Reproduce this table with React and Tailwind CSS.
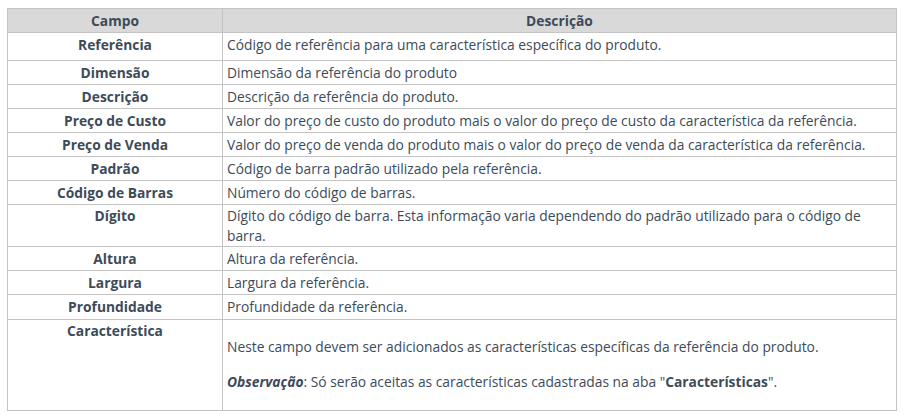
const ROWS = [
  { campo: "Referência", desc: "Código de referência para uma característica específica do produto.", h: "h-[28px]", pad: "align-top pt-[2px]" },
  { campo: "Dimensão", desc: "Dimensão da referência do produto", h: "h-[24px]" },
  { campo: "Descrição", desc: "Descrição da referência do produto.", h: "h-[24px]" },
  { campo: "Preço de Custo", desc: "Valor do preço de custo do produto mais o valor do preço de custo da característica da referência.", h: "h-[24px]" },
  { campo: "Preço de Venda", desc: "Valor do preço de venda do produto mais o valor do preço de venda da característica da referência.", h: "h-[24px]" },
  { campo: "Padrão", desc: "Código de barra padrão utilizado pela referência.", h: "h-[24px]" },
  { campo: "Código de Barras", desc: "Número do código de barras.", h: "h-[24px]" },
  { campo: "Dígito", desc: "Dígito do código de barra. Esta informação varia dependendo do padrão utilizado para o código de barra.", h: "h-[40px]", pad: "align-top pt-[1px]" },
  { campo: "Altura", desc: "Altura da referência.", h: "h-[24px]" },
  { campo: "Largura", desc: "Largura da referência.", h: "h-[24px]" },
  { campo: "Profundidade", desc: "Profundidade da referência.", h: "h-[25px]" },
];

export default function App() {
  return (
    <div className="bg-white w-[907px] h-[415px] pl-[7px] pt-[8px] font-['Open_Sans',sans-serif] text-[13.8px] leading-[20px] text-[#3d4b59]">
      <table className="w-[890px] border-collapse table-fixed">
        <colgroup>
          <col className="w-[215px]" />
          <col />
        </colgroup>
        <thead>
          <tr className="h-[24px] bg-[#d9d9d9]">
            <th className="border border-[#c4c4c4] font-bold text-center px-1 py-0">Campo</th>
            <th className="border border-[#c4c4c4] font-bold text-center px-1 py-0">Descrição</th>
          </tr>
        </thead>
        <tbody>
          {ROWS.map((row) => (
            <tr key={row.campo} className={row.h}>
              <td className={`border border-[#c4c4c4] font-bold text-center px-1 py-0 ${row.pad ?? "align-middle"}`}>
                {row.campo}
              </td>
              <td className={`border border-[#c4c4c4] px-1 py-0 ${row.pad ?? "align-middle"}`}>{row.desc}</td>
            </tr>
          ))}
          <tr className="h-[91px]">
            <td className="border border-[#c4c4c4] font-bold text-center px-1 pt-[1px] align-top">Característica</td>
            <td className="border border-[#c4c4c4] px-1 py-[1px] align-top">
              <p className="mt-[16px]">Neste campo devem ser adicionados as características específicas da referência do produto.</p>
              <p className="mt-[15px] mb-[15px]">
                <em className="font-bold">Observação</em>: Só serão aceitas as características cadastradas na aba "<strong>Características</strong>".
              </p>
            </td>
          </tr>
        </tbody>
      </table>
    </div>
  );
}
